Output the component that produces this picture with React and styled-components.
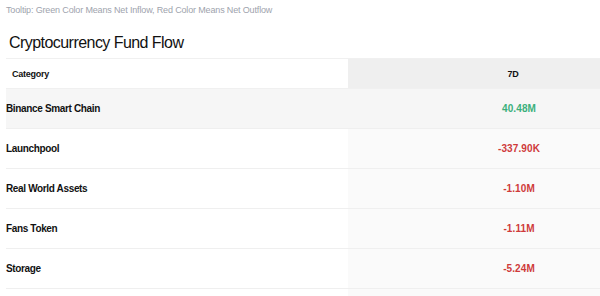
import React from "react";
import styled, { createGlobalStyle } from "styled-components";

const Global = createGlobalStyle`
  html, body {
    margin: 0;
    padding: 0;
    background: #ffffff;
    overflow: hidden;
  }
  body {
    font-family: "Liberation Sans", Arial, sans-serif;
    color: #111;
  }
`;

const Page = styled.div`
  width: 600px;
  height: 296px;
  overflow: hidden;
  padding: 5px 0 0 6px;
  box-sizing: border-box;
`;

const Tip = styled.div`
  font-size: 9px;
  letter-spacing: -0.15px;
  color: #9ea3ad;
  line-height: 11px;
`;

const Title = styled.h2`
  margin: 0;
  padding: 18px 0 0 3px;
  height: 42px;
  box-sizing: border-box;
  font-size: 16px;
  letter-spacing: -0.55px;
  font-weight: 400;
  line-height: 18px;
  color: #111;
`;

const Table = styled.table`
  width: 672px;
  border-collapse: collapse;
  table-layout: fixed;
`;

const HeadCell = styled.th`
  height: 29px;
  padding: 0 0 0 ${(p) => (p.$value ? "0" : "6px")};
  font-size: 9px;
  letter-spacing: -0.25px;
  font-weight: 700;
  text-align: ${(p) => (p.$value ? "center" : "left")};
  background: ${(p) => (p.$value ? "#efefef" : "#ffffff")};
  border-top: 1px solid #f0f0f0;
  border-bottom: 1px solid #f0f0f0;
  color: #111;
`;

const Row = styled.tr`
  border-bottom: 1px solid #efefef;
`;

const Cell = styled.td`
  height: 38px;
  padding: 0 0 1px;
  font-size: 10px;
  letter-spacing: -0.35px;
  font-weight: 700;
  color: #111;
  background: ${(p) => (p.$hover ? "#f6f6f6" : "#ffffff")};
`;

const ValueCell = styled.td`
  height: 38px;
  padding: 0 0 1px 12px;
  text-align: center;
  font-size: 10px;
  letter-spacing: 0.1px;
  font-weight: 700;
  color: ${(p) => (p.$up ? "#3bb07c" : "#cf3a3a")};
  background: ${(p) => (p.$hover ? "#f6f6f6" : "#fafafa")};
`;

const rows = [
  { name: "Binance Smart Chain", value: "40.48M", up: true },
  { name: "Launchpool", value: "-337.90K" },
  { name: "Real World Assets", value: "-1.10M" },
  { name: "Fans Token", value: "-1.11M" },
  { name: "Storage", value: "-5.24M" },
  { name: "", value: "" },
];

export default function App() {
  return (
    <Page>
      <Global />
      <Tip>Tooltip: Green Color Means Net Inflow, Red Color Means Net Outflow</Tip>
      <Title>Cryptocurrency Fund Flow</Title>
      <Table>
        <colgroup>
          <col style={{ width: 342 }} />
          <col style={{ width: 330 }} />
        </colgroup>
        <thead>
          <tr>
            <HeadCell>Category</HeadCell>
            <HeadCell $value>7D</HeadCell>
          </tr>
        </thead>
        <tbody>
          {rows.map((r, i) => (
            <Row key={i}>
              <Cell $hover={i === 0}>{r.name}</Cell>
              <ValueCell $hover={i === 0} $up={r.up}>
                {r.value}
              </ValueCell>
            </Row>
          ))}
        </tbody>
      </Table>
    </Page>
  );
}
